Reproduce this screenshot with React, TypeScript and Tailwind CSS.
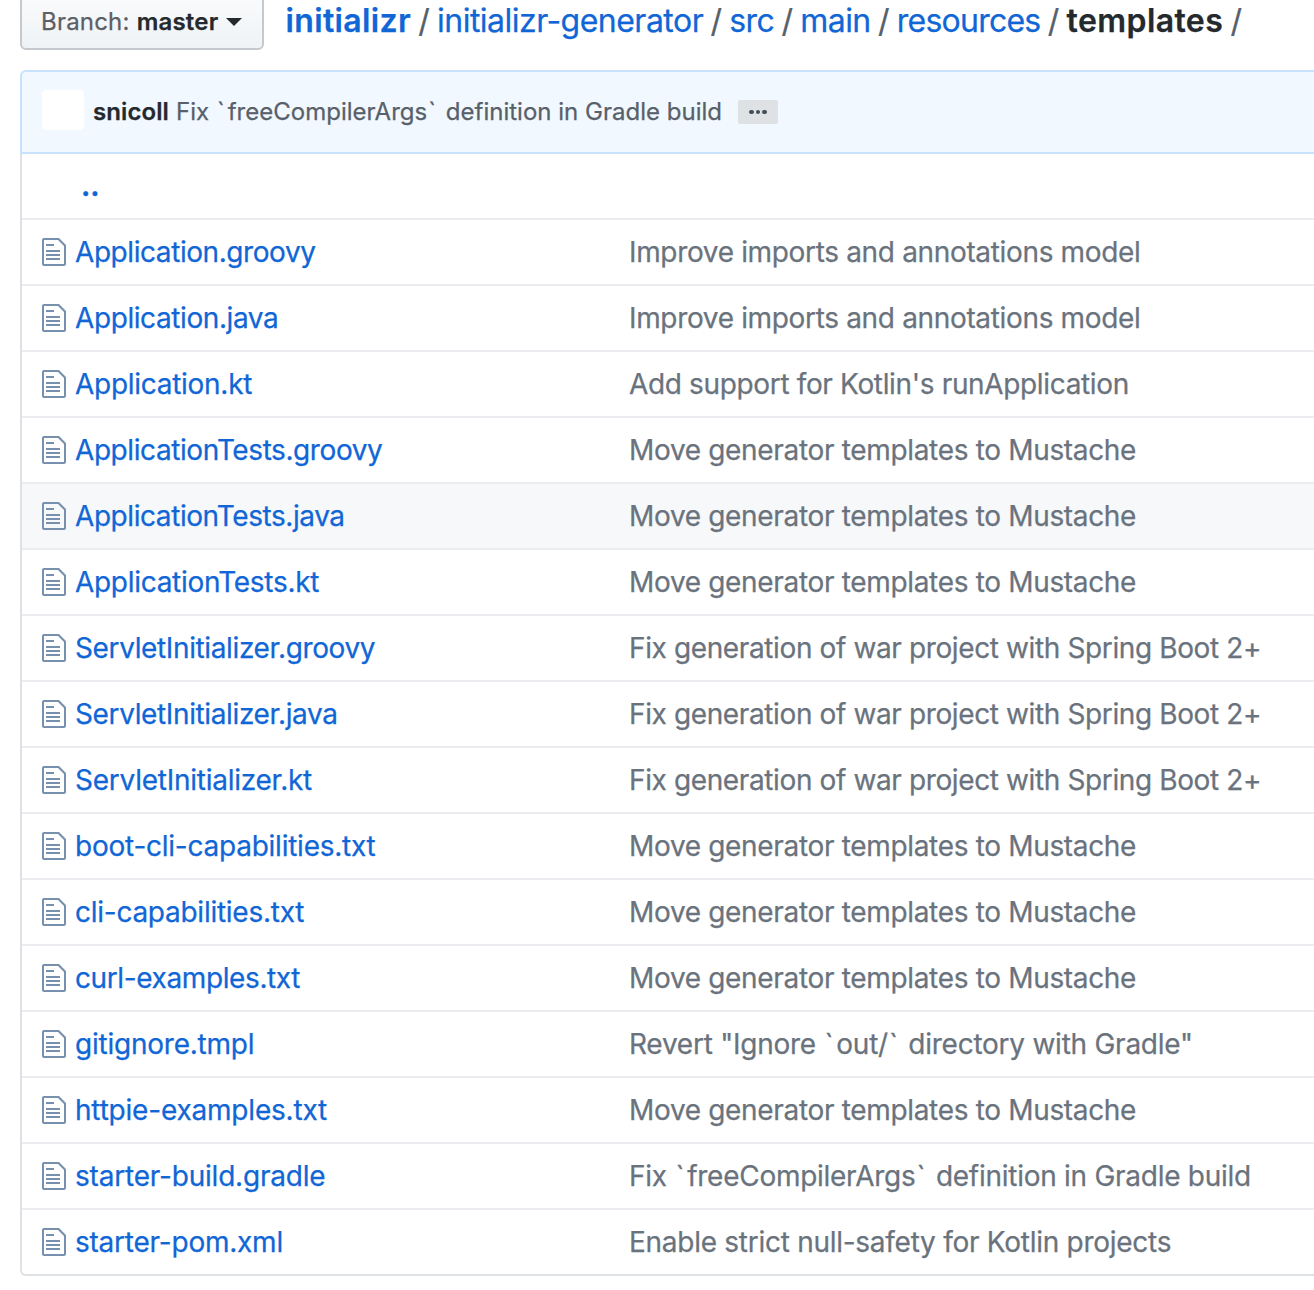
import React from "react";

const link = "text-[#1166d6]";

type Message = { text: string; tracking: string };
type Entry = { name: string; nameTracking: string; message: Message; hovered?: boolean };

const move: Message = { text: "Move generator templates to Mustache", tracking: "tracking-[-0.33px]" };
const war: Message = { text: "Fix generation of war project with Spring Boot 2+", tracking: "tracking-[-0.38px]" };
const imports: Message = { text: "Improve imports and annotations model", tracking: "tracking-[-0.34px]" };

const entries: Entry[] = [
  { name: "Application.groovy", nameTracking: "tracking-[-0.43px]", message: imports },
  { name: "Application.java", nameTracking: "tracking-[-0.41px]", message: imports },
  {
    name: "Application.kt",
    nameTracking: "tracking-[-0.28px]",
    message: { text: "Add support for Kotlin's runApplication", tracking: "tracking-[-0.35px]" },
  },
  { name: "ApplicationTests.groovy", nameTracking: "tracking-[-0.42px]", message: move },
  { name: "ApplicationTests.java", nameTracking: "tracking-[-0.43px]", message: move, hovered: true },
  { name: "ApplicationTests.kt", nameTracking: "tracking-[-0.3px]", message: move },
  { name: "ServletInitializer.groovy", nameTracking: "tracking-[-0.37px]", message: war },
  { name: "ServletInitializer.java", nameTracking: "tracking-[-0.37px]", message: war },
  { name: "ServletInitializer.kt", nameTracking: "tracking-[-0.25px]", message: war },
  { name: "boot-cli-capabilities.txt", nameTracking: "tracking-[-0.24px]", message: move },
  { name: "cli-capabilities.txt", nameTracking: "tracking-[-0.26px]", message: move },
  { name: "curl-examples.txt", nameTracking: "tracking-[-0.39px]", message: move },
  {
    name: "gitignore.tmpl",
    nameTracking: "tracking-[-0.23px]",
    message: { text: 'Revert "Ignore `out/` directory with Gradle"', tracking: "tracking-[-0.25px]" },
  },
  { name: "httpie-examples.txt", nameTracking: "tracking-[-0.2px]", message: move },
  {
    name: "starter-build.gradle",
    nameTracking: "tracking-[-0.2px]",
    message: { text: "Fix `freeCompilerArgs` definition in Gradle build", tracking: "tracking-[-0.27px]" },
  },
  {
    name: "starter-pom.xml",
    nameTracking: "tracking-[-0.23px]",
    message: { text: "Enable strict null-safety for Kotlin projects", tracking: "tracking-[-0.27px]" },
  },
];

function FileIcon() {
  return (
    <svg viewBox="0 0 12 16" className="h-8 w-6 shrink-0 fill-[#7790ad]" aria-hidden="true">
      <path d="M6 5H2V4h4v1zM2 8h7V7H2v1zm0 2h7V9H2v1zm0 2h7v-1H2v1zm10-7.5V14c0 .55-.45 1-1 1H1c-.55 0-1-.45-1-1V2c0-.55.45-1 1-1h7.5L12 4.5zM11 5L8 2H1v12h10V5z" />
    </svg>
  );
}

function Slash() {
  return <span className="mx-[7.3px] text-[#586069]">/</span>;
}

// Gives backticks a little extra room on both sides.
function MessageText({ text }: { text: string }) {
  return (
    <>
      {text.split(/(`)/).map((part, i) =>
        part === "`" ? (
          <span key={i} className="pr-[3px] pl-px">
            {part}
          </span>
        ) : (
          part
        ),
      )}
    </>
  );
}

export default function App() {
  return (
    <div className="h-[1290px] w-[1314px] overflow-hidden bg-white pl-5 font-[Inter,sans-serif] text-[#24292e] [-webkit-text-stroke:0.25px]">
      <header className="flex h-[70px] items-start whitespace-nowrap">
        <button className="-mt-2 flex h-[58px] w-[244px] items-center rounded-md border-2 border-[#c5c9cd] bg-linear-to-b from-[#fafbfc] to-[#eff3f6] pt-0.5 pl-[19px] text-2xl">
          <span className="tracking-[0.2px] text-[#5b6064]">Branch:</span>
          <span className="ml-[7px] font-semibold tracking-[0.2px]">master</span>
          <svg viewBox="0 0 16 8" className="ml-2 h-2 w-4 fill-[#24292e]" aria-hidden="true">
            <path d="M0 0h16L8 8z" />
          </svg>
        </button>
        <nav className="ml-[21.5px] flex h-[42px] items-center text-[32px]">
          <a className={`${link} font-semibold tracking-[0.35px]`}>initializr</a>
          <Slash />
          <a className={`${link} tracking-[-0.52px]`}>initializr-generator</a>
          <Slash />
          <a className={`${link} tracking-[-0.6px]`}>src</a>
          <Slash />
          <a className={`${link} tracking-[-0.6px]`}>main</a>
          <Slash />
          <a className={`${link} tracking-[-0.75px]`}>resources</a>
          <Slash />
          <strong className="font-semibold tracking-[0.4px]">templates</strong>
          <Slash />
        </nav>
      </header>

      <section className="flex h-[84px] items-center rounded-tl-md border-2 border-r-0 border-[#c8e1ff] bg-[#f1f8ff] pl-5 text-2xl whitespace-nowrap">
        <span className="mb-1 h-10 w-[42px] rounded bg-white" />
        <span className="ml-[9px] font-semibold tracking-[0.1px]">snicoll</span>
        <span className="ml-[7px] tracking-[0.01px] text-[#586069]">
          <MessageText text="Fix `freeCompilerArgs` definition in Gradle build" />
        </span>
        <span className="ml-4 flex h-6 w-10 items-center justify-center gap-0.5 rounded-xs bg-[#dfe2e5]">
          <i className="size-[4.5px] rounded-full bg-[#444d56]" />
          <i className="size-[4.5px] rounded-full bg-[#444d56]" />
          <i className="size-[4.5px] rounded-full bg-[#444d56]" />
        </span>
      </section>

      <main className="rounded-bl-md border-b-2 border-l-2 border-[#dfe2e5] text-[28px] whitespace-nowrap">
        <div className="flex h-16 items-center pl-[59px]">
          <a className={`${link} font-bold`}>..</a>
        </div>
        {entries.map((e) => (
          <div
            key={e.name}
            className={`flex h-[66px] items-center border-t-2 border-[#eaecef] pl-5 ${e.hovered ? "bg-[#f6f8fa]" : ""}`}
          >
            <FileIcon />
            <a className={`${link} ${e.nameTracking} ml-[9px] w-[554px]`}>{e.name}</a>
            <span className={`${e.message.tracking} text-[#6a737d]`}>
              <MessageText text={e.message.text} />
            </span>
          </div>
        ))}
      </main>
    </div>
  );
}
